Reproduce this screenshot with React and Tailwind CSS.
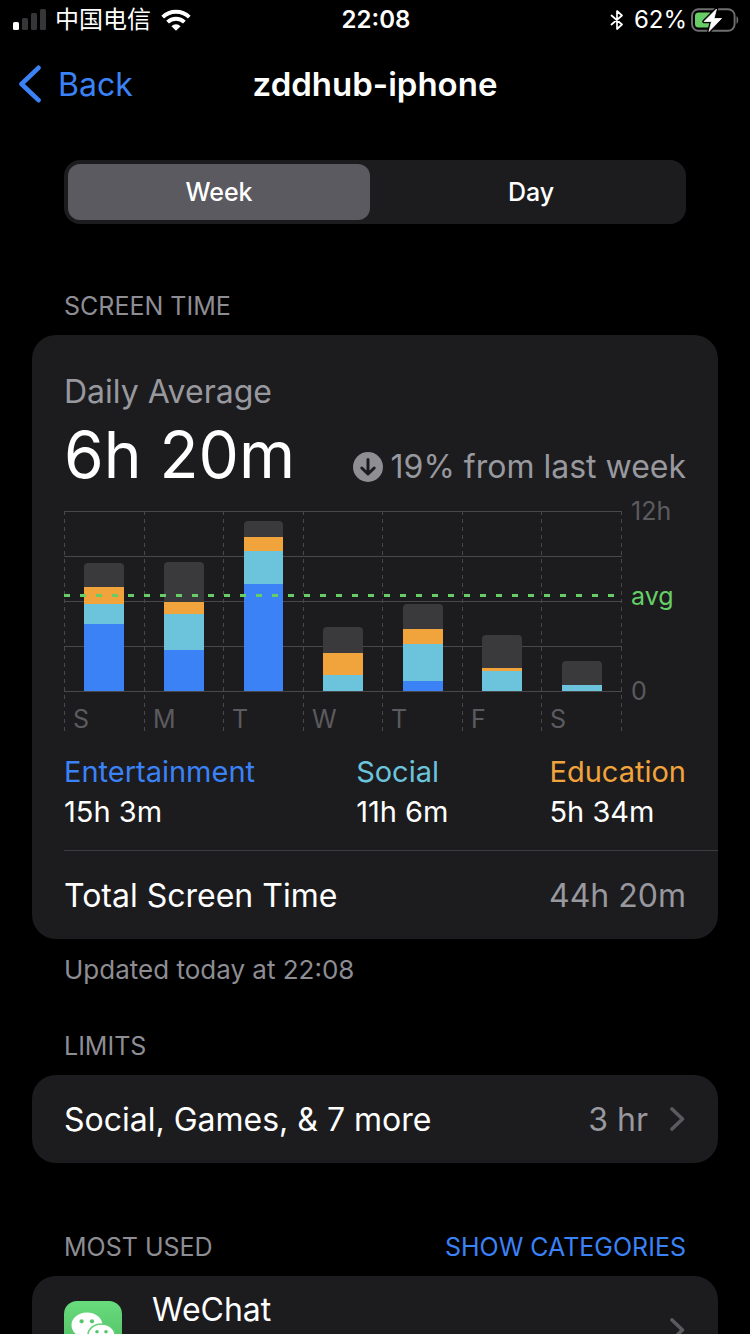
import React, { useState } from "react";

const COLORS = {
  other: "#3a3a3c",
  education: "#f1a33c",
  social: "#6bc4dc",
  entertainment: "#3b82f7",
};

const BASELINE = 180;

// Each bar lists the top edge of its stacked segments.
const DAYS = [
  { label: "S", line: 0, x: 20, width: 40, other: 52, education: 76, social: 93, entertainment: 113 },
  { label: "M", line: 80, x: 100, width: 40, other: 51, education: 91, social: 103, entertainment: 139 },
  { label: "T", line: 159, x: 180, width: 39, other: 10, education: 26, social: 40, entertainment: 73 },
  { label: "W", line: 239, x: 259, width: 40, other: 116, education: 142, social: 164, entertainment: 180 },
  { label: "T", line: 318, x: 339, width: 40, other: 93, education: 118, social: 133, entertainment: 170 },
  { label: "F", line: 398, x: 418, width: 40, other: 124, education: 157, social: 160, entertainment: 180 },
  { label: "S", line: 477, x: 498, width: 40, other: 150, education: 174, social: 174, entertainment: 180 },
];

function Bar({ day }) {
  const { x, width } = day;
  const top = day.other;
  return (
    <g>
      <path
        d={`M${x} ${day.education}V${top + 4}q0-4 4-4h${width - 8}q4 0 4 4V${day.education}z`}
        fill={COLORS.other}
      />
      <rect x={x} y={day.education} width={width} height={day.social - day.education} fill={COLORS.education} />
      <rect x={x} y={day.social} width={width} height={day.entertainment - day.social} fill={COLORS.social} />
      <rect x={x} y={day.entertainment} width={width} height={BASELINE - day.entertainment} fill={COLORS.entertainment} />
    </g>
  );
}

function WeekChart() {
  return (
    <svg viewBox="0 -16 622 240" className="block w-full overflow-visible text-[25px]" role="img" aria-label="Screen time per day">
      <g stroke="#48484a" strokeWidth="1">
        {[0, 45, 90, 135, 180].map((y) => (
          <line key={y} x1="0" x2="558" y1={y + 0.5} y2={y + 0.5} />
        ))}
        {[...DAYS.map((d) => d.line), 557].map((x) => (
          <line key={x} x1={x + 0.5} x2={x + 0.5} y1="0" y2="220" strokeDasharray="4 4" />
        ))}
      </g>
      {DAYS.map((day) => (
        <Bar key={day.line} day={day} />
      ))}
      <line x1="0" x2="557" y1="84.5" y2="84.5" stroke="#67ce67" strokeWidth="3" strokeDasharray="6 10" />
      <g fill="#5b5b5f">
        {DAYS.map((day) => (
          <text key={day.line} x={day.line + 9} y="217">
            {day.label}
          </text>
        ))}
        <text x="567" y="9">12h</text>
        <text x="567" y="189">0</text>
      </g>
      <text x="567" y="94" fill="#67ce67">avg</text>
    </svg>
  );
}

function Chevron() {
  return (
    <svg viewBox="0 0 16 26" className="h-[26px] w-4 shrink-0" fill="none" stroke="#5b5b5f" strokeWidth="3.6" strokeLinecap="round" strokeLinejoin="round" aria-hidden="true">
      <path d="M2 3 12.5 13 2 23" />
    </svg>
  );
}

function StatusBar() {
  return (
    <div className="grid h-10 grid-cols-3 items-center pr-[11px] pl-[13px] text-2xl leading-10">
      <div className="flex items-center">
        <svg viewBox="0 0 34 22" className="h-[22px] w-[34px]" aria-hidden="true">
          <rect x="0" y="13" width="6" height="8" rx="1.5" fill="#fff" />
          <g fill="#363638">
            <rect x="9" y="9" width="6" height="12" rx="1.5" />
            <rect x="18" y="4" width="6" height="17" rx="1.5" />
            <rect x="27" y="0" width="6" height="21" rx="1.5" />
          </g>
        </svg>
        <span className="ml-2 leading-10">中国电信</span>
        <svg viewBox="0 0 30 22" className="ml-2.5 h-[22px] w-[30px]" fill="none" stroke="#fff" strokeWidth="3.9" aria-hidden="true">
          <path d="M1.7 8.2a19 19 0 0 1 26.6 0" />
          <path d="M6.6 13.2a12 12 0 0 1 16.8 0" />
          <path d="M15 21.8 10.4 17.2a6.6 6.6 0 0 1 9.2 0z" fill="#fff" stroke="none" />
        </svg>
      </div>
      <div className="text-center font-semibold">22:08</div>
      <div className="flex items-center justify-end">
        <svg viewBox="0 0 14 20" className="h-5 w-3.5" fill="none" stroke="#fff" strokeWidth="1.7" strokeLinejoin="round" strokeLinecap="round" aria-hidden="true">
          <path d="M1.5 5.5 12 14.5 7 19V1l5 4.5L1.5 14.5" />
        </svg>
        <span className="ml-2.5">62%</span>
        <svg viewBox="0 0 48 26" className="ml-1 h-[26px] w-12" aria-hidden="true">
          <rect x="1" y="2.2" width="42.6" height="21.6" rx="6.5" fill="none" stroke="#6f6f71" strokeWidth="1.9" />
          <path d="M45.5 9.2c2.3 1.2 2.3 6.4 0 7.6z" fill="#6f6f71" />
          <path d="M7.5 5.5H19V20.5H7.5A3.5 3.5 0 0 1 4 17V9a3.5 3.5 0 0 1 3.5-3.5z" fill="#67ce67" />
          <path d="M25.5 2 13 14.5h7.5L18 24.5 30.5 11.5H23z" fill="#fff" stroke="#000" strokeWidth="3.5" strokeLinejoin="round" />
          <path d="M25.5 2 13 14.5h7.5L18 24.5 30.5 11.5H23z" fill="#fff" stroke="#fff" strokeWidth="0.8" strokeLinejoin="round" />
        </svg>
      </div>
    </div>
  );
}

function NavBar() {
  return (
    <header className="grid h-[88px] grid-cols-[1fr_auto_1fr] items-center px-[18px] leading-10">
      <a href="#back" className="flex items-center gap-4 text-[32px] text-[#3b82f7]">
        <svg viewBox="0 0 24 38" className="h-[38px] w-6" fill="none" stroke="currentColor" strokeWidth="4.6" strokeLinecap="round" strokeLinejoin="round" aria-hidden="true">
          <path d="M20.5 2.8 3.5 19l17 16.2" />
        </svg>
        <span className="pt-0.5">Back</span>
      </a>
      <h1 className="text-[33px] font-semibold">zddhub-iphone</h1>
    </header>
  );
}

function PeriodTabs() {
  const [period, setPeriod] = useState("Week");
  return (
    <div className="mx-8 grid h-16 grid-cols-2 gap-2.5 rounded-2xl bg-[#1c1c1f] p-1 text-[25px] font-medium">
      {["Week", "Day"].map((name) => (
        <button
          key={name}
          type="button"
          aria-pressed={period === name}
          onClick={() => setPeriod(name)}
          className={period === name ? "rounded-xl bg-[#5b5a60] pt-0.5" : "rounded-xl pt-0.5"}
        >
          {name}
        </button>
      ))}
    </div>
  );
}

const LEGEND = [
  { name: "Entertainment", time: "15h 3m", tone: "text-[#3b82f7]" },
  { name: "Social", time: "11h 6m", tone: "text-[#6bc4dc]" },
  { name: "Education", time: "5h 34m", tone: "text-[#f1a33c]" },
];

function ScreenTimeCard() {
  return (
    <section className="rounded-3xl bg-[#1c1c1e] pt-[37px]">
      <div className="px-8">
        <p className="text-[32px] leading-10 text-[#98989f]">Daily Average</p>
        <div className="flex items-end justify-between pt-[3px]">
          <p className="text-[64px] leading-[80px]">6h 20m</p>
          <p className="flex items-center gap-2 pb-2 text-[32px] leading-10 text-[#98989f]">
            <svg viewBox="0 0 30 30" className="size-[30px]" aria-hidden="true">
              <circle cx="15" cy="15" r="15" fill="#8e8e93" />
              <path d="M15 7.5V22M8.8 16 15 22l6.2-6" fill="none" stroke="#1c1c1e" strokeWidth="3" strokeLinecap="round" strokeLinejoin="round" />
            </svg>
            19% from last week
          </p>
        </div>
        <WeekChart />
        <dl className="mt-[17px] flex justify-between text-[29px] leading-10">
          {LEGEND.map((item) => (
            <div key={item.name}>
              <dt className={item.tone}>{item.name}</dt>
              <dd>{item.time}</dd>
            </div>
          ))}
        </dl>
      </div>
      <div className="mt-[18px] ml-8 flex h-[89px] items-center justify-between border-t border-[#3d3d41] pt-0.5 pr-8 text-[32px]">
        <span>Total Screen Time</span>
        <span className="text-[#98989f]">44h 20m</span>
      </div>
    </section>
  );
}

function WeChatIcon() {
  return (
    <svg viewBox="0 0 58 58" className="size-[58px] shrink-0" aria-hidden="true">
      <defs>
        <linearGradient id="wechat" x1="0" y1="0" x2="0" y2="1">
          <stop offset="0" stopColor="#67dc7d" />
          <stop offset="1" stopColor="#4fb85f" />
        </linearGradient>
      </defs>
      <rect width="58" height="58" rx="13" fill="url(#wechat)" />
      <path d="M23 11.5c8.8 0 15.5 5.6 15.5 12.7S31.8 37 23 37c-1.9 0-3.7-.3-5.3-.8L12 39l1.3-5C9.6 31.7 7.5 28.2 7.5 24.2c0-7.1 6.7-12.7 15.5-12.7z" fill="#fff" />
      <ellipse cx="37.5" cy="34" rx="13.5" ry="11" fill="#fff" stroke="#62d177" strokeWidth="1.6" />
      <path d="M43 42.5 48 46l-1-5z" fill="#fff" />
      <g fill="#58c56c">
        <circle cx="17.6" cy="20.3" r="2.1" />
        <circle cx="28" cy="20.3" r="2.1" />
        <circle cx="33" cy="30.8" r="1.8" />
        <circle cx="42" cy="30.8" r="1.8" />
      </g>
    </svg>
  );
}

export default function App() {
  return (
    <div className="h-screen overflow-hidden bg-black font-['Inter','Noto_Sans_CJK_SC',sans-serif] text-white">
      <StatusBar />
      <NavBar />
      <main className="px-8 pt-8">
        <PeriodTabs />

        <h2 className="mt-16 mb-[11px] px-8 text-[25px] leading-9 text-[#8d8d93]">SCREEN TIME</h2>
        <ScreenTimeCard />
        <p className="mt-[13px] px-8 text-[26px] leading-9 text-[#8d8d93]">Updated today at 22:08</p>

        <h2 className="mt-10 mb-[11px] px-8 text-[25px] leading-9 text-[#8d8d93]">LIMITS</h2>
        <a href="#limits" className="flex h-[88px] items-center rounded-3xl bg-[#1c1c1e] px-8 text-[32px]">
          <span className="grow pt-0.5">Social, Games, &amp; 7 more</span>
          <span className="mr-[22px] pt-0.5 text-[#98989f]">3 hr</span>
          <Chevron />
        </a>

        <div className="mt-[66px] mb-[11px] flex justify-between px-8 text-[25px] leading-9">
          <h2 className="text-[#8d8d93]">MOST USED</h2>
          <button type="button" className="text-[#3b82f7]">SHOW CATEGORIES</button>
        </div>
        <a href="#wechat-usage" className="flex h-[108px] items-center rounded-3xl bg-[#1c1c1e] px-8 text-[32px]">
          <WeChatIcon />
          <span className="ml-[30px] grow self-start pt-3.5 leading-10">WeChat</span>
          <Chevron />
        </a>
      </main>
    </div>
  );
}
